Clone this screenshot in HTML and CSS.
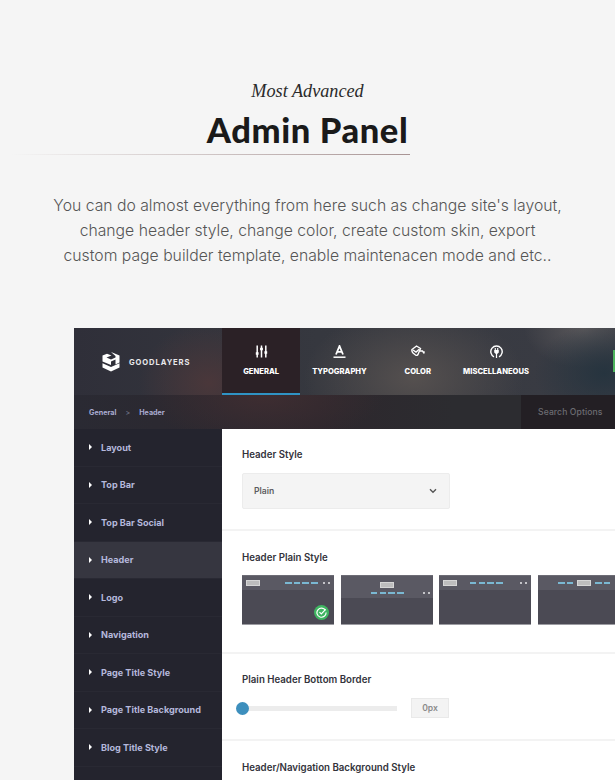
FILE: index.html
```html
<!DOCTYPE html>
<html lang="en">
<head>
    <meta charset="UTF-8">
    <meta name="viewport" content="width=device-width, initial-scale=1.0">
    <title>Admin Panel</title>
    <link rel="stylesheet" href="styles.css">
</head>
<body>
    <section class="intro">
        <p class="intro-kicker">Most Advanced</p>
        <h1 class="intro-title">Admin Panel</h1>
        <div class="intro-rule"></div>
        <p class="intro-text">You can do almost everything from here such as change site's layout,<br>change header style, change color, create custom skin, export<br>custom page builder template, enable maintenacen mode and etc..</p>
    </section>

    <div class="panel">
        <header class="panel-top">
            <div class="brand">
                <svg class="brand-mark" width="20" height="20" viewBox="0 0 20 20">
                    <path fill="#fff" d="M10 0 L18.5 3.5 V10.5 L14.5 12.5 V7.5 L10 9.5 V13 L1.5 9.5 V3.5 L6 1.8 L10.5 3.6 L5.5 5.6 L10 7.4 L14.5 5.6 V4 Z"/>
                    <path fill="#fff" d="M1.5 11.2 L10 15 L18.5 11.2 V15.5 L10 19.5 L1.5 15.5 Z"/>
                </svg>
                <span class="brand-name">GOODLAYERS</span>
            </div>
            <nav class="tabs">
                <div class="tab tab-active">
                    <svg class="tab-icon" width="13" height="13" viewBox="0 0 13 13" fill="none" stroke="#fff" stroke-width="1.5">
                        <path d="M2.2 0.5V12.5M6.5 0.5V12.5M10.8 0.5V12.5"/>
                        <path stroke-width="2.4" d="M0.8 8.5H3.6M5.1 4H7.9M9.4 7.5H12.2"/>
                    </svg>
                    <span>GENERAL</span>
                </div>
                <div class="tab">
                    <svg class="tab-icon" width="13" height="13" viewBox="0 0 13 13" fill="none" stroke="#fff" stroke-width="1.8">
                        <path d="M3 9.5 L6.5 1 L10 9.5M4.2 6.8H8.8"/>
                        <path stroke-width="1.5" d="M0.5 12.2H12.5"/>
                    </svg>
                    <span>TYPOGRAPHY</span>
                </div>
                <div class="tab">
                    <svg class="tab-icon" width="14" height="13" viewBox="0 0 14 13" fill="none" stroke="#fff" stroke-width="1.4">
                        <path d="M1 4.5 L5.5 1 L9.5 3.5 L7 9.5 Q6 11 4.5 10 L2 8 Q0.5 6.5 1 4.5 Z"/>
                        <path d="M2 5 L5 7 L8.5 4"/>
                        <path d="M9 6 L11.5 6 L13 8.5M13 8.5 L13 6.2"/>
                    </svg>
                    <span>COLOR</span>
                </div>
                <div class="tab">
                    <svg class="tab-icon" width="13" height="13" viewBox="0 0 13 13" fill="none" stroke="#fff" stroke-width="1.4">
                        <path d="M4 11.8 A5.7 5.7 0 1 1 9 11.8"/>
                        <path fill="#fff" stroke="none" d="M4.2 5H8.8V7.4 L7.1 9V13H5.9V9 L4.2 7.4Z"/>
                        <path stroke-width="1.1" d="M5.3 3V5M7.7 3V5"/>
                    </svg>
                    <span>MISCELLANEOUS</span>
                </div>
            </nav>
            <div class="top-flag"></div>
        </header>

        <div class="crumbs">
            <div class="crumb-path">
                <span>General</span>
                <span class="crumb-sep">&gt;</span>
                <span>Header</span>
            </div>
            <div class="search">Search Options</div>
        </div>

        <div class="panel-body">
            <aside class="side">
                <div class="side-item">Layout</div>
                <div class="side-item">Top Bar</div>
                <div class="side-item">Top Bar Social</div>
                <div class="side-item side-item-active">Header</div>
                <div class="side-item">Logo</div>
                <div class="side-item">Navigation</div>
                <div class="side-item">Page Title Style</div>
                <div class="side-item">Page Title Background</div>
                <div class="side-item">Blog Title Style</div>
            </aside>

            <main class="options">
                <section class="option option-style">
                    <h3 class="option-label">Header Style</h3>
                    <div class="select">
                        <span>Plain</span>
                        <svg width="8" height="6" viewBox="0 0 8 6" fill="none" stroke="#555" stroke-width="1.4"><path d="M1 1.2 L4 4.2 L7 1.2"/></svg>
                    </div>
                </section>

                <section class="option option-plain">
                    <h3 class="option-label">Header Plain Style</h3>
                    <div class="thumbs">
                        <div class="thumb">
                            <div class="thumb-head">
                                <i class="t-logo"></i>
                                <i class="t-nav t-push"></i>
                                <i class="t-dots"></i>
                            </div>
                            <div class="thumb-check">
                                <svg width="11" height="11" viewBox="0 0 12 12" fill="none" stroke="#fff" stroke-width="1.3">
                                    <path d="M10.3 3.6 A5 5 0 1 0 11 6"/>
                                    <path d="M3.8 5.6 L5.8 7.6 L10.5 2.6"/>
                                </svg>
                            </div>
                        </div>
                        <div class="thumb">
                            <div class="thumb-head thumb-head-tall">
                                <i class="t-logo"></i>
                                <div class="t-row">
                                    <i class="t-nav"></i>
                                    <i class="t-dots"></i>
                                </div>
                            </div>
                        </div>
                        <div class="thumb">
                            <div class="thumb-head">
                                <i class="t-logo"></i>
                                <i class="t-nav t-gap"></i>
                                <i class="t-dots t-push"></i>
                            </div>
                        </div>
                        <div class="thumb">
                            <div class="thumb-head">
                                <i class="t-nav t-nav-half t-gap-wide"></i>
                                <i class="t-logo t-logo-mid"></i>
                                <i class="t-nav t-nav-half"></i>
                                <i class="t-dots t-push"></i>
                            </div>
                        </div>
                    </div>
                </section>

                <section class="option option-border">
                    <h3 class="option-label">Plain Header Bottom Border</h3>
                    <div class="slider-row">
                        <div class="slider"><span class="slider-knob"></span></div>
                        <div class="slider-val">0px</div>
                    </div>
                </section>

                <section class="option option-bg">
                    <h3 class="option-label">Header/Navigation Background Style</h3>
                </section>
            </main>
        </div>
    </div>
</body>
</html>
```

FILE: styles.css
```css
* {
    margin: 0;
    padding: 0;
    box-sizing: border-box;
}

html, body {
    width: 100%;
    height: 100%;
    overflow: hidden;
}

body {
    background-color: #f5f5f5;
    font-family: 'Inter', 'Liberation Sans', sans-serif;
}

/* intro */
.intro {
    height: 328px;
    padding-top: 80px;
    text-align: center;
}

.intro-kicker {
    font-family: 'Liberation Serif', serif;
    font-style: italic;
    font-size: 18.2px;
    line-height: 22px;
    color: #2a2a2a;
}

.intro-title {
    margin-top: 6px;
    font-family: 'Lato', sans-serif;
    font-size: 34.5px;
    line-height: 44px;
    font-weight: 900;
    letter-spacing: 0.6px;
    color: #1a1a1a;
}

.intro-rule {
    width: 400px;
    height: 1px;
    margin: 2px 0 0 10px;
    background: linear-gradient(to right, rgba(160, 130, 130, 0), #a89494);
}

.intro-text {
    margin-top: 38px;
    font-size: 15.75px;
    line-height: 25px;
    font-weight: 300;
    color: #555;
}

/* panel */
.panel {
    width: 541px;
    margin-left: 74px;
    overflow: hidden;
}

.panel-top {
    position: relative;
    display: flex;
    height: 67px;
    background:
        radial-gradient(ellipse 70px 60px at 135px 55px, #4a373a 0%, rgba(74, 55, 58, 0) 100%),
        radial-gradient(ellipse 110px 70px at 340px 50px, #55504f 0%, rgba(85, 80, 79, 0) 100%),
        radial-gradient(ellipse 70px 50px at 530px 45px, #26343f 0%, rgba(38, 52, 63, 0) 100%),
        radial-gradient(ellipse 60px 40px at 510px 0, #59575a 0%, rgba(89, 87, 90, 0) 100%),
        linear-gradient(to right, #2f2f39, #36383f 45%, #3a3c44);
}

.brand {
    display: flex;
    align-items: center;
    gap: 8px;
    width: 148px;
    padding: 1px 0 0 27px;
}

.brand-name {
    font-size: 7.6px;
    font-weight: 700;
    letter-spacing: 0.9px;
    color: #e9e9ec;
}

.tabs {
    display: flex;
}

.tab {
    display: flex;
    flex-direction: column;
    align-items: center;
    width: 78.3px;
    padding-top: 17px;
    font-size: 7.6px;
    font-weight: 800;
    color: #fff;
}

.tab-icon {
    margin-bottom: 9px;
}

.tab-active {
    background-color: #2b2126;
    border-bottom: 2px solid #2f93c4;
}

.top-flag {
    position: absolute;
    left: 539px;
    top: 22px;
    width: 3px;
    height: 22px;
    background-color: #4cb35c;
}

.crumbs {
    display: flex;
    justify-content: space-between;
    height: 34px;
    background:
        radial-gradient(ellipse 120px 50px at 190px 0, #3e2d31 0%, rgba(62, 45, 49, 0) 100%),
        linear-gradient(to right, #2a2a33, #2d272d 45%, #2c2c30 70%);
}

.crumb-path {
    display: flex;
    align-items: center;
    gap: 9px;
    padding-left: 15px;
    font-size: 7.2px;
    font-weight: 700;
    color: #a9abd0;
}

.crumb-sep {
    font-weight: 400;
    color: #77798e;
}

.search {
    display: flex;
    align-items: center;
    width: 94px;
    padding-left: 17px;
    font-size: 8.6px;
    font-weight: 500;
    letter-spacing: 0.1px;
    white-space: nowrap;
    color: #6c6c72;
    background-color: #231f24;
}

.panel-body {
    display: flex;
    height: 351px;
}

.side {
    flex: none;
    width: 148px;
    background-color: #24242e;
}

.side-item {
    position: relative;
    display: flex;
    align-items: center;
    height: 37.5px;
    padding-left: 27px;
    font-size: 9.1px;
    font-weight: 700;
    color: #b5b8dc;
    border-bottom: 1px solid #292933;
}

.side-item::before {
    content: "";
    position: absolute;
    left: 15px;
    top: 50%;
    margin-top: -3px;
    border-left: 3px solid #fff;
    border-top: 3px solid transparent;
    border-bottom: 3px solid transparent;
}

.side-item-active {
    background-color: #363640;
}

.options {
    flex: 1;
    min-width: 0;
    background-color: #fff;
}

.option {
    padding: 20px 0 0 20px;
    border-bottom: 2px solid #f3f3f3;
}

.option-style {
    height: 102px;
}

.option-plain {
    height: 123px;
    padding-top: 21px;
}

.option-border {
    height: 87px;
}

.option-bg {
    padding-top: 21px;
    border-bottom: 0;
}

.option-label {
    font-size: 9.7px;
    line-height: 12px;
    font-weight: 600;
    color: #33333b;
}

.select {
    display: flex;
    align-items: center;
    justify-content: space-between;
    width: 208px;
    height: 36px;
    margin-top: 12px;
    padding: 0 12px 0 11px;
    font-size: 8.6px;
    font-weight: 600;
    color: #5c5c60;
    background-color: #f4f4f4;
    border: 1px solid #ececec;
    border-radius: 2px;
}

.thumbs {
    display: flex;
    gap: 6.5px;
    margin-top: 11px;
}

.thumb {
    position: relative;
    flex: none;
    width: 92px;
    height: 50px;
    background-color: #4b4a54;
    border-bottom: 1px solid #9c9ca2;
    border-top: 1px solid #6d6c75;
}

.thumb-head {
    display: flex;
    align-items: center;
    height: 14px;
    padding: 0 4px;
    background-color: #5a5963;
}

.thumb-head-tall {
    flex-direction: column;
    justify-content: center;
    height: 22px;
    padding-top: 2px;
}

.t-logo {
    flex: none;
    width: 14px;
    height: 6px;
    background-color: #bdbdbd;
    border: 1px solid #d6d6d6;
}

.t-logo-mid {
    margin: 0 4px;
}

.t-row {
    display: flex;
    align-items: center;
    width: 100%;
    margin-top: 4px;
    padding-left: 26px;
    gap: 14px;
}

/* four nav dashes drawn by one gradient */
.t-nav {
    flex: none;
    width: 33px;
    height: 2px;
    background: repeating-linear-gradient(to right, #7ab8d2 0, #7ab8d2 6.5px, transparent 6.5px, transparent 8.7px);
}

.t-nav-half {
    width: 15px;
}

.t-dots {
    flex: none;
    width: 7px;
    height: 2px;
    margin-left: 5px;
    background: linear-gradient(to right, #c4c4c8 0, #c4c4c8 2px, transparent 2px, transparent 5px, #c4c4c8 5px);
}

.t-push {
    margin-left: auto;
}

.t-gap {
    margin-left: 13px;
}

.t-gap-wide {
    margin-left: 16px;
}

.thumb-check {
    position: absolute;
    right: 5px;
    bottom: 4px;
    display: flex;
    align-items: center;
    justify-content: center;
    width: 15px;
    height: 15px;
    border-radius: 50%;
    background-color: #3fb561;
}

.slider-row {
    display: flex;
    align-items: center;
    margin-top: 12px;
}

.slider {
    position: relative;
    width: 155px;
    height: 5px;
    background-color: #ececec;
}

.slider-knob {
    position: absolute;
    left: -6px;
    top: -4px;
    width: 13px;
    height: 13px;
    border-radius: 50%;
    background-color: #3d8fbd;
}

.slider-val {
    display: flex;
    align-items: center;
    justify-content: center;
    width: 38px;
    height: 20px;
    margin-left: 14px;
    font-size: 8.6px;
    font-weight: 600;
    color: #8b8b8b;
    background-color: #f3f3f3;
    border: 1px solid #e9e9e9;
}
```
